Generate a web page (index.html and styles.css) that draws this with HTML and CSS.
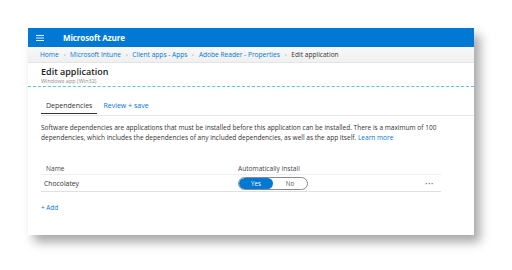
FILE: index.html
```html
<!DOCTYPE html>
<html>
<head>
<meta charset="utf-8">
<link rel="stylesheet" href="styles.css">
</head>
<body>
<div class="panel">
  <header class="topbar">
    <svg class="burger" width="8" height="6" viewBox="0 0 8 6"><path d="M0 0.5H8M0 3H8M0 5.5H8" stroke="#fff" stroke-width="0.9"/></svg>
    <span class="brand">Microsoft Azure</span>
  </header>
  <nav class="crumbs">
    <a>Home</a><span class="sep">&gt;</span><a>Microsoft Intune</a><span class="sep">&gt;</span><a>Client apps - Apps</a><span class="sep">&gt;</span><a>Adobe Reader - Properties</a><span class="sep">&gt;</span><span class="cur">Edit application</span>
  </nav>
  <div class="titlebox">
    <div class="title">Edit application</div>
    <div class="subtitle">Windows app (Win32)</div>
  </div>
  <div class="content">
    <div class="tabs">
      <div class="tab active">Dependencies</div>
      <div class="tab link">Review + save</div>
    </div>
    <p class="desc">Software dependencies are applications that must be installed before this application can be installed. There is a maximum of 100 dependencies, which includes the dependencies of any included dependencies, as well as the app itself. <a class="lnk">Learn more</a></p>
    <div class="table">
      <div class="row head">
        <div class="c-name">Name</div>
        <div class="c-auto">Automatically Install</div>
      </div>
      <div class="row body">
        <div class="c-name">Chocolatey</div>
        <div class="c-auto">
          <div class="toggle"><span class="on">Yes</span><span class="off">No</span></div>
        </div>
        <div class="c-more">&middot;&middot;&middot;</div>
      </div>
    </div>
    <div class="add">+ Add</div>
  </div>
</div>
</body>
</html>
```
FILE: styles.css
```css
html, body { margin: 0; padding: 0; background: #fff; }
body {
  width: 512px; height: 270px; overflow: hidden;
  font-family: "Open Sans", "Noto Sans", sans-serif;
  color: #323130;
  padding: 28px 0 0 28px;
  box-sizing: border-box;
}
.panel {
  width: 446px; height: 207px;
  background: #fff;
  box-shadow: 6px 7px 10px rgba(0,0,0,0.35);
  display: flex; flex-direction: column;
  overflow: hidden;
}
.topbar {
  height: 19px; background: #0078d4;
  display: flex; align-items: center;
  padding-left: 8px;
}
.burger { margin-right: 19px; }
.brand { color: #fff; font-weight: 700; font-size: 8px; letter-spacing: -0.1px; }
.crumbs {
  height: 15px; background: linear-gradient(#f8f8f8, #f0f0f0);
  border-bottom: 1px solid #e4e4e4;
  display: flex; align-items: center;
  padding-left: 12px;
  font-size: 6.6px;
}
.crumbs a { color: #0078d4; }
.crumbs .sep { color: #999; margin: 0 4px; font-size: 6px; transform: scaleX(0.7); display: inline-block; }
.crumbs .cur { color: #333; }
.titlebox {
  padding: 3px 0 0 13px; height: 20px;
  border-bottom: 1px dashed #55c6ec;
}
.title { font-size: 9px; font-weight: 600; line-height: 12px; color: #222; }
.subtitle { font-size: 5.5px; color: #8a8a8a; line-height: 6px; }
.content { padding: 14px 0 0 13px; }
.tabs {
  display: flex; border-bottom: 1px solid #e6e6e6;
  height: 14px; align-items: flex-start;
}
.tab { font-size: 7px; line-height: 10px; padding: 0 5px; height: 12px; }
.tab.active { border-bottom: 1.5px solid #333; color: #333; }
.tab.link { color: #0078d4; margin-left: 1px; }
.desc {
  margin: 7px 0 0; font-size: 6.55px; line-height: 10px; color: #333;
  width: 412px;
}
.lnk { color: #0078d4; }
.table { width: 400px; margin-top: 20px; }
.row { display: flex; align-items: center; }
.row.head { height: 11px; border-bottom: 1px solid #eeeeee; font-size: 6.6px; color: #444; }
.row.body { height: 16px; border-bottom: 1px solid #e0e0e0; font-size: 6.8px; }
.c-name { width: 192px; padding-left: 5px; }
.row.body .c-name { padding-left: 3px; width: 194px; }
.c-auto { flex: 1; }
.c-more { width: 16px; color: #666; font-size: 10px; letter-spacing: 0.3px; }
.toggle {
  width: 70px; height: 13px; box-sizing: border-box;
  border: 1px solid #8a8a8a; border-radius: 7px;
  display: flex; overflow: hidden;
}
.toggle span { flex: 1; display: flex; align-items: center; justify-content: center; font-size: 6.2px; }
.toggle .on { background: #0078d4; color: #fff; border-radius: 6px; flex: 0 0 34px; }
.toggle .off { color: #555; }
.add { color: #0078d4; font-size: 6.4px; margin-top: 11px; }
```
